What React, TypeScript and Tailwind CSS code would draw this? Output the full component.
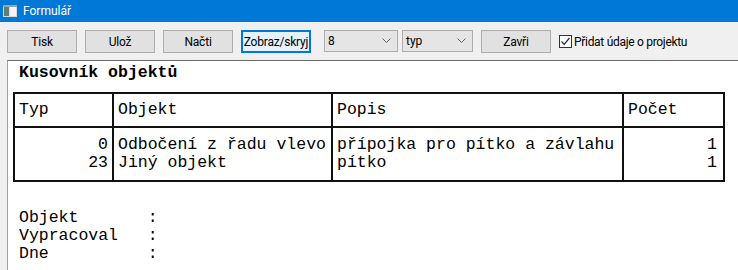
import React from "react";

const ui = { fontFamily: 'Roboto, "Noto Sans", sans-serif' };
const mono = { fontFamily: '"Liberation Mono", "Courier New", monospace' };

function Btn({ label, focused, w = 70 }: { label: string; focused?: boolean; w?: number }) {
  return (
    <div
      className={
        "h-[23px] flex items-center justify-center text-[12px] tracking-[-0.2px] text-black shrink-0 " +
        (focused
          ? "border-2 border-[#0078d7] bg-[#e5f1fb]"
          : "border border-[#adadad] bg-[#e1e1e1]")
      }
      style={{ width: w }}
    >
      {label}
    </div>
  );
}

function Select({ value, w }: { value: string; w: number }) {
  return (
    <div
      className="h-[22px] flex items-center justify-between border border-[#adadad] bg-[#e5e5e5] pl-[3px] pr-[6px] text-[12px] text-black shrink-0"
      style={{ width: w }}
    >
      <span>{value}</span>
      <svg width="9" height="6" viewBox="0 0 9 6">
        <path d="M0.5 0.5 L4.5 4.5 L8.5 0.5" fill="none" stroke="#606060" strokeWidth="1" />
      </svg>
    </div>
  );
}

export default function App() {
  return (
    <div className="w-[738px] h-[270px] bg-[#f0f0f0] flex flex-col overflow-hidden" style={ui}>
      <div className="h-[22px] bg-[#0078d7] flex items-center pl-[3px] shrink-0">
        <svg width="14" height="12" viewBox="0 0 14 12" className="mr-[6px]">
          <rect x="0" y="0" width="14" height="12" fill="#d9d9d9" />
          <rect x="1" y="2" width="5" height="9" fill="#5c7f7a" />
          <rect x="7" y="2" width="6" height="9" fill="#f4f4f4" />
          <rect x="0" y="0" width="14" height="2" fill="#9aa4a8" />
        </svg>
        <span className="text-white text-[12px] leading-none">Formulář</span>
      </div>
      <div className="h-[38px] shrink-0 flex items-start pt-[8px] pl-[7px]">
        <Btn label="Tisk" />
        <div className="w-[8px]" />
        <Btn label="Ulož" />
        <div className="w-[8px]" />
        <Btn label="Načti" />
        <div className="w-[8px]" />
        <Btn label="Zobraz/skryj" focused />
        <div className="w-[13px]" />
        <Select value="8" w={74} />
        <div className="w-[4px]" />
        <Select value="typ" w={71} />
        <div className="w-[8px]" />
        <Btn label="Zavři" />
        <div className="w-[8px]" />
        <div className="h-[23px] flex items-center text-[12px] tracking-[-0.3px] text-black">
          <div className="w-[13px] h-[13px] border border-[#333333] bg-white flex items-center justify-center mr-[2px]">
            <svg width="11" height="11" viewBox="0 0 11 11">
              <path d="M1.5 5.5 L4.2 8.3 L9.5 2" fill="none" stroke="#222" strokeWidth="1.2" />
            </svg>
          </div>
          <span>Přidat údaje o projektu</span>
        </div>
      </div>
      <div className="flex-1 ml-[7px] bg-white border-t border-t-[#696969] border-l border-l-[#a0a0a0] text-[16.5px] leading-[18px] text-black" style={mono}>
        <div className="pl-[11px] pt-[3px] font-bold">Kusovník objektů</div>
        <div className="ml-[5px] mt-[10px] w-[712px] border-2 border-[#111]">
          <div className="flex h-[34px] border-b-2 border-[#111]">
            <div className="w-[99px] border-r-2 border-[#111] pl-[4px] flex items-center">Typ</div>
            <div className="w-[219px] border-r-2 border-[#111] pl-[4px] flex items-center">Objekt</div>
            <div className="w-[291px] border-r-2 border-[#111] pl-[4px] flex items-center">Popis</div>
            <div className="flex-1 pl-[4px] flex items-center">Počet</div>
          </div>
          <div className="flex h-[52px]">
            <div className="w-[99px] border-r-2 border-[#111] pr-[4px] pt-[8px] text-right">
              <div>0</div>
              <div>23</div>
            </div>
            <div className="w-[219px] border-r-2 border-[#111] pl-[4px] pt-[8px] whitespace-nowrap">
              <div>Odbočení z řadu vlevo</div>
              <div>Jiný objekt</div>
            </div>
            <div className="w-[291px] border-r-2 border-[#111] pl-[4px] pt-[8px] whitespace-nowrap">
              <div>přípojka pro pítko a závlahu</div>
              <div>pítko</div>
            </div>
            <div className="flex-1 pr-[6px] pt-[8px] text-right">
              <div>1</div>
              <div>1</div>
            </div>
          </div>
        </div>
        <div className="pl-[11px] mt-[27px] whitespace-pre">
          <div>{"Objekt       :"}</div>
          <div>{"Vypracoval   :"}</div>
          <div>{"Dne          :"}</div>
        </div>
      </div>
    </div>
  );
}
